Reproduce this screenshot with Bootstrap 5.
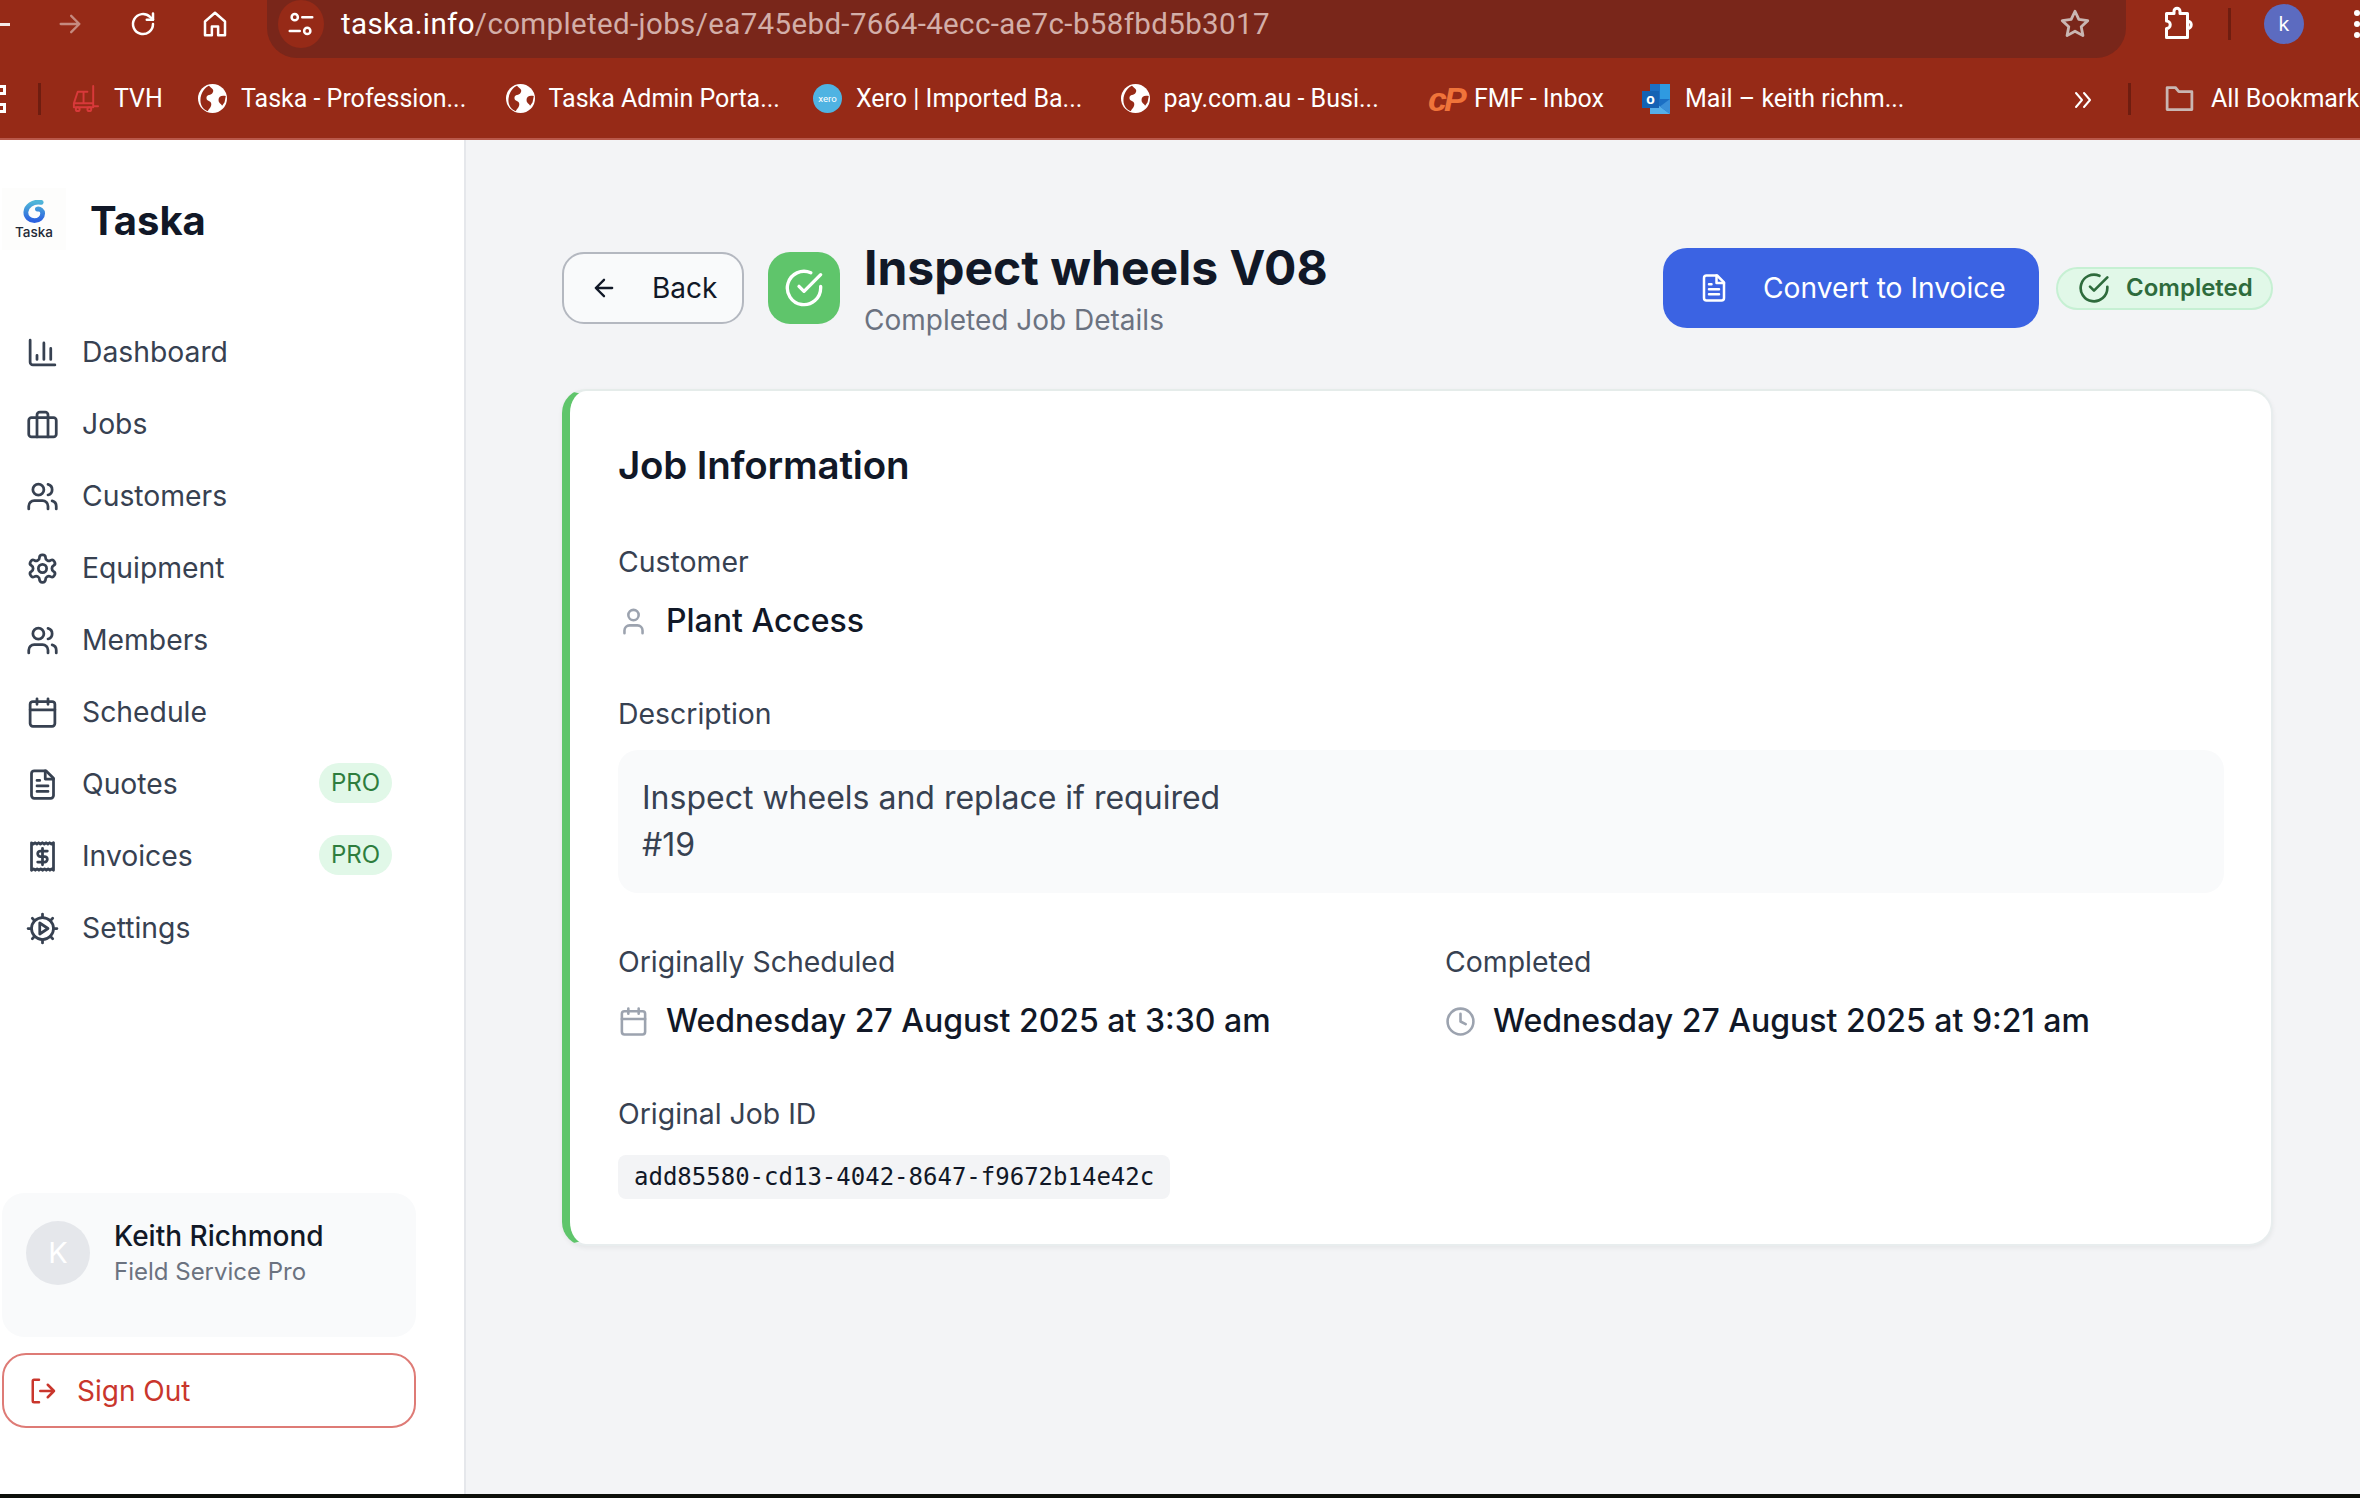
<!DOCTYPE html>
<html lang="en">
<head>
  <meta charset="UTF-8">
  <meta name="viewport" content="width=device-width,initial-scale=1">
  <title>Taska - Completed Job</title>
  <link href="https://cdn.jsdelivr.net/npm/bootstrap@5.3.3/dist/css/bootstrap.min.css" rel="stylesheet">
  <style>
    html,body{height:100%;overflow:hidden}
    body{font-family:"Inter","Liberation Sans",sans-serif;background:#f3f4f6;color:#111827}
    svg.ico{fill:none;stroke:currentColor;stroke-width:2;stroke-linecap:round;stroke-linejoin:round;flex:none}
    .shell{width:2360px;height:1498px}

    .tabs-row{height:58px;background:#962a17;color:#fff}
    .back-stub{width:10px;height:3px;background:#fff;margin-top:-10px;margin-right:46px;opacity:.9;flex:none}
    .fwd-ico{width:28px;height:28px;color:#c58a7f;margin-right:44px;margin-top:-10px}
    .rel-ico{width:30px;height:30px;margin-right:42px;margin-top:-10px}
    .home-ico{width:30px;height:30px;margin-right:37px;margin-top:-10px}
    .omni{width:1859px;height:58px;background:#79261a;border-radius:0 0 30px 30px;padding:0 34px 10px 11px;font-family:"Roboto","Liberation Sans",sans-serif;font-size:29.5px;letter-spacing:.36px;flex:none}
    .tune-wrap{width:46px;height:48px;border-radius:50%;background:#962a17;margin-right:17px;flex:none}
    .tune-wrap svg{width:30px;height:30px}
    .url-host{color:#fff}
    .url-path{color:#d3aea8}
    .star-ico{width:34px;height:34px;color:#c9b6b2}
    .ext-ico{width:36px;height:36px;margin-left:33px;margin-top:-10px}
    .vsep{width:3px;height:32px;background:#6f1d10;flex:none}
    .tabs-row .vsep{margin-left:33px;margin-top:-10px}
    .prof{width:40px;height:40px;border-radius:50%;background:#5c6bc0;color:#fff;font-size:20px;flex:none;margin-top:-10px}
    .dots{width:6px;margin-left:50px;gap:5px;margin-top:-10px}
    .dots span{width:6px;height:6px;border-radius:50%;background:#fff}

    .bm-row{height:82px;padding-top:1px;background:#962a17;color:#fff;border-bottom:2px solid #b9584a;font-family:"Roboto","Liberation Sans",sans-serif;font-size:25px;white-space:nowrap;overflow:hidden}
    .bm{gap:14px;flex:none}
    .bm svg{width:29px;height:29px;flex:none}
    .grid-stub{width:6px;height:28px;flex:none;margin-right:32px}
    .bm-row .vsep{height:32px;margin-right:29px}
    .bw-tvh{width:128px;gap:15px}
    .bw-wide{width:307.5px}
    .bw-fmf{width:213px;gap:13px}
    .bw-mail{width:432px;gap:12px}
    .bw-mail svg{width:32px;height:32px}
    .bm-cp{font-weight:900;font-style:italic;color:#f0743a;font-size:34px;letter-spacing:-3px;width:33px;line-height:30px;font-family:"Liberation Sans",sans-serif}
    .more-box{width:55px;flex:none}
    .more-box svg{width:20px;height:20px;display:block;margin-top:2px}
    .bm-row .sep2{margin-right:32px}
    .bw-all{gap:15px}
    .bw-all svg{width:33px;height:33px;color:#c9b6b2}

    .app{height:1354px}
    .side{width:466px;background:#fff;border-right:2px solid #e5e7eb;padding:0 48px 66px 2px;flex:none}
    .logo-row{margin-top:48px;margin-bottom:66px;height:62px}
    .logo-box{width:64px;height:62px;background:#fdfdfc;line-height:1}
    .logo-box svg{width:23px;height:23px;margin-top:2px}
    .logo-txt{font-size:13.5px;font-weight:500;color:#1f2937;margin-top:3px}
    .brand-name{font-size:40px;font-weight:700;color:#111827;margin-left:24px;margin-top:3px}
    .side-link{height:72px;padding:0 24px 0 23.5px;color:#374151;font-size:28.3px;gap:23.5px}
    .side-link svg{width:33px;height:33px}
    .pro-pill{width:73px;height:40px;background:#e1f8e8;color:#2e7d3e;font-size:24px;font-weight:400;border-radius:20px;margin-top:-2px}
    .user-box{height:144px;background:#f9fafb;border-radius:22px;padding:25px 24px 0;gap:24px;margin-top:auto}
    .avatar-k{width:64px;height:64px;border-radius:50%;background:#e5e7eb;color:#fff;font-size:29px;flex:none;margin-top:3px}
    .user-name{font-size:28px;font-weight:500;line-height:36px;color:#111827}
    .user-role{font-size:24px;line-height:36px;color:#6b7280}
    .out-btn{height:75px;margin-top:16px;border:2px solid #de7b76;border-radius:24px;color:#c9362c;font-size:28px;padding:0 0 0 25px;gap:18px;background:#fff;text-align:left}
    .out-btn svg{width:30px;height:30px}

    .main-pane{padding:108px 87px 0 96px;min-width:0}
    .head-row{height:80px}
    .back-btn{width:182px;height:72px;border:2px solid #b4b8c0;border-radius:22px;background:#f9fafb;color:#111827;font-size:28px;padding:0 0 0 26px;gap:34px;flex:none}
    .back-btn svg{width:28px;height:28px}
    .ok-tile{width:72px;height:72px;border-radius:22px;background:#5fc56b;color:#fff;margin-left:24px;margin-right:24px;flex:none}
    .ok-tile svg{width:40px;height:40px}
    .job-title{font-size:48px;font-weight:700;line-height:58px;margin:0 0 5px;color:#111827}
    .job-sub{font-size:28px;line-height:36px;color:#6b7280}
    .conv-btn{width:376px;height:80px;border-radius:24px;background:#3b63e3;color:#fff;border:0;font-size:28.2px;padding:0 0 0 36px;gap:34px;flex:none}
    .conv-btn svg{width:30px;height:30px}
    .done-pill{width:217px;height:43px;margin-left:17px;background:#e1f8e8;border:2px solid #c6f0d3;border-radius:22px;color:#2e6b3c;font-size:24px;font-weight:600;gap:16px;padding:0 0 0 20px;flex:none}
    .done-pill svg{width:32px;height:32px}
    .job-card{margin-top:61px;height:857px;border:0;border-top:2px solid #e5ecea;border-right:2px solid #e8edee;border-bottom:2px solid #e8edee;border-left:8px solid #5fc56b;border-radius:24px;padding:49px 47px 0 48px;box-shadow:0 2px 5px rgba(0,0,0,.06)}
    .info-head{font-size:38.5px;font-weight:600;line-height:50px;margin:0 0 52px;color:#111827;letter-spacing:-.2px}
    .fld-label{font-size:28.4px;line-height:40px;color:#374151;margin-bottom:16px}
    .fld-value{font-size:32px;font-weight:500;line-height:46px;color:#111827;gap:17px;margin-bottom:50px}
    .fld-value svg{width:31px;height:31px;color:#9ca3af}
    .desc-box{height:143px;background:#f9fafb;border-radius:20px;padding:24px;font-size:32px;line-height:47px;color:#374151;margin-bottom:49px}
    .date-grid{display:grid;grid-template-columns:1fr 1fr;column-gap:48px}
    .id-wrap{margin-top:5px}
    .id-chip{display:block;width:552px;height:44px;line-height:44px;padding:0 16px;border-radius:8px;background:#f3f4f6;color:#111827;font-family:"DejaVu Sans Mono",monospace;font-size:24px;white-space:nowrap}
    .strip{height:4px;background:#0d0f0a}
  </style>
</head>
<body>
<div class="shell d-flex flex-column">

  <div class="tabs-row d-flex align-items-center">
    <span class="back-stub"></span>
    <svg class="ico fwd-ico" viewBox="0 0 24 24"><path d="M4 12h16M13 5l7 7-7 7"/></svg>
    <svg class="ico rel-ico" viewBox="0 0 24 24"><path d="M20 12a8 8 0 1 1-2.400-5.700L20 8.500"/><path d="M20 3.500v5h-5"/></svg>
    <svg class="ico home-ico" viewBox="0 0 24 24"><path d="M4 21V10l8-7 8 7v11h-5.500v-7h-5v7z"/></svg>
    <div class="omni d-flex align-items-center">
      <span class="tune-wrap d-flex align-items-center justify-content-center">
        <svg class="ico" viewBox="0 0 24 24"><circle cx="7" cy="6.500" r="2.500"/><path d="M13 6.500h8M3 17.500h8"/><circle cx="17" cy="17.500" r="2.500"/></svg>
      </span>
      <span><span class="url-host">taska.info</span><span class="url-path">/completed-jobs/ea745ebd-7664-4ecc-ae7c-b58fbd5b3017</span></span>
      <svg class="ico star-ico ms-auto" viewBox="0 0 24 24"><path d="M12 3l2.700 5.800 6.300.8-4.600 4.300 1.200 6.300-5.600-3.100-5.600 3.100 1.200-6.300L3 9.600l6.300-.8z"/></svg>
    </div>
    <svg class="ico ext-ico" viewBox="0 0 24 24"><path d="M5 5h5V3.500a2 2 0 0 1 4 0V5h5v16H5v-6a2.500 2.500 0 0 0 0-5zM19 10a2.500 2.500 0 0 1 0 5"/></svg>
    <span class="vsep"></span>
    <span class="prof d-flex align-items-center justify-content-center ms-auto">k</span>
    <span class="dots d-flex flex-column"><span></span><span></span><span></span></span>
  </div>

  <div class="bm-row d-flex align-items-center">
    <svg class="grid-stub" viewBox="0 0 6 28"><path d="M-3 1.500h7.500v7h-7.500M-3 19.500h7.500v7h-7.500" fill="none" stroke="#fff" stroke-width="3"/></svg>
    <span class="vsep"></span>
    <span class="bm bw-tvh d-flex align-items-center">
      <svg class="ico" viewBox="0 0 30 30" color="#d8393a"><path d="M24 2v21h5M18 8H8L4 20h20M4 20v4h20M14 8v12"/><circle cx="8" cy="26" r="2"/><circle cx="20" cy="26" r="2"/></svg>
      <span>TVH</span>
    </span>
    <span class="bm bw-wide d-flex align-items-center">
      <svg viewBox="0 0 24 24"><circle cx="12" cy="12" r="12" fill="#fff"/><path d="M9 1.500c2 2 5 3 3 6-1 2-5 1-5 4s4 2 4 5-2 4-3 6c-3-1-6-4-6-9 0-6 4-11 7-12zM23 10c-3-1-6 0-6 3s2 3 3 5l2-3z" fill="#962a17"/></svg>
      <span>Taska - Profession...</span>
    </span>
    <span class="bm bw-wide d-flex align-items-center">
      <svg viewBox="0 0 24 24"><circle cx="12" cy="12" r="12" fill="#fff"/><path d="M9 1.500c2 2 5 3 3 6-1 2-5 1-5 4s4 2 4 5-2 4-3 6c-3-1-6-4-6-9 0-6 4-11 7-12zM23 10c-3-1-6 0-6 3s2 3 3 5l2-3z" fill="#962a17"/></svg>
      <span>Taska Admin Porta...</span>
    </span>
    <span class="bm bw-wide d-flex align-items-center">
      <svg viewBox="0 0 30 30"><circle cx="15" cy="15" r="15" fill="#4fb3e2"/><text x="15" y="18.500" text-anchor="middle" font-size="10" font-family="Roboto,sans-serif" fill="#fff">xero</text></svg>
      <span>Xero | Imported Ba...</span>
    </span>
    <span class="bm bw-wide d-flex align-items-center">
      <svg viewBox="0 0 24 24"><circle cx="12" cy="12" r="12" fill="#fff"/><path d="M9 1.500c2 2 5 3 3 6-1 2-5 1-5 4s4 2 4 5-2 4-3 6c-3-1-6-4-6-9 0-6 4-11 7-12zM23 10c-3-1-6 0-6 3s2 3 3 5l2-3z" fill="#962a17"/></svg>
      <span>pay.com.au - Busi...</span>
    </span>
    <span class="bm bw-fmf d-flex align-items-center">
      <span class="bm-cp">cP</span>
      <span>FMF - Inbox</span>
    </span>
    <span class="bm bw-mail d-flex align-items-center">
      <svg viewBox="0 0 32 32"><rect x="9" y="1" width="20" height="30" fill="#1b6fc4"/><rect x="19" y="1" width="10" height="15" fill="#2f9ae0"/><path d="M9 16l20 15H9z" fill="#56aee8"/><path d="M29 16v15l-10-7.500z" fill="#3a8fd8"/><rect x="1" y="8" width="17" height="17" fill="#1462b4"/><text x="9.500" y="21" text-anchor="middle" font-size="15" font-weight="700" font-family="Roboto,sans-serif" fill="#fff">o</text></svg>
      <span>Mail – keith richm...</span>
    </span>
    <span class="more-box">
      <svg class="ico" viewBox="0 0 20 20"><path d="M3 3l6 7-6 7M11 3l6 7-6 7"/></svg>
    </span>
    <span class="vsep sep2"></span>
    <span class="bm bw-all d-flex align-items-center">
      <svg class="ico" viewBox="0 0 24 24"><path d="M3 4h6l2.500 3H21v13H3z"/></svg>
      <span>All Bookmarks</span>
    </span>
  </div>

  <div class="app d-flex">
    <aside class="side d-flex flex-column">
      <div class="logo-row d-flex align-items-center">
        <div class="logo-box d-flex flex-column align-items-center justify-content-center">
          <svg viewBox="0 0 24 24">
            <defs><linearGradient id="swirl" x1="0" y1="0" x2="0" y2="1"><stop offset="0" stop-color="#4fb6d8"/><stop offset="1" stop-color="#2d62e0"/></linearGradient></defs>
            <path d="M19 2.500C10 1 3.500 6.500 3 12.500 2.700 18 7 21.500 12 21.500c5 0 8.500-3.500 8.500-7.500 0-3-2.500-5-5.500-4.500" fill="none" stroke="url(#swirl)" stroke-width="5" stroke-linecap="round"/>
          </svg>
          <span class="logo-txt">Taska</span>
        </div>
        <span class="brand-name">Taska</span>
      </div>

      <nav class="d-flex flex-column">
        <a class="side-link d-flex align-items-center text-decoration-none" href="#"><svg class="ico" viewBox="0 0 24 24"><path d="M3 3v16a2 2 0 0 0 2 2h16"/><path d="M8 17v-3M13 17V5M18 17V9"/></svg><span>Dashboard</span></a>
        <a class="side-link d-flex align-items-center text-decoration-none" href="#"><svg class="ico" viewBox="0 0 24 24"><rect x="2" y="7" width="20" height="14" rx="2"/><path d="M16 21V5a2 2 0 0 0-2-2h-4a2 2 0 0 0-2 2v16"/></svg><span>Jobs</span></a>
        <a class="side-link d-flex align-items-center text-decoration-none" href="#"><svg class="ico" viewBox="0 0 24 24"><path d="M16 21v-2a4 4 0 0 0-4-4H6a4 4 0 0 0-4 4v2"/><circle cx="9" cy="7" r="4"/><path d="M22 21v-2a4 4 0 0 0-3-3.870"/><path d="M16 3.130a4 4 0 0 1 0 7.750"/></svg><span>Customers</span></a>
        <a class="side-link d-flex align-items-center text-decoration-none" href="#"><svg class="ico" viewBox="0 0 24 24"><path d="M12.220 2h-.44a2 2 0 0 0-2 2v.18a2 2 0 0 1-1 1.730l-.43.25a2 2 0 0 1-2 0l-.15-.08a2 2 0 0 0-2.730.73l-.22.38a2 2 0 0 0 .73 2.730l.15.1a2 2 0 0 1 1 1.720v.51a2 2 0 0 1-1 1.740l-.15.09a2 2 0 0 0-.73 2.730l.22.38a2 2 0 0 0 2.730.73l.15-.08a2 2 0 0 1 2 0l.43.25a2 2 0 0 1 1 1.730V20a2 2 0 0 0 2 2h.44a2 2 0 0 0 2-2v-.18a2 2 0 0 1 1-1.730l.43-.25a2 2 0 0 1 2 0l.15.08a2 2 0 0 0 2.730-.73l.22-.39a2 2 0 0 0-.73-2.730l-.15-.08a2 2 0 0 1-1-1.740v-.5a2 2 0 0 1 1-1.740l.15-.09a2 2 0 0 0 .73-2.730l-.22-.38a2 2 0 0 0-2.730-.73l-.15.08a2 2 0 0 1-2 0l-.43-.25a2 2 0 0 1-1-1.730V4a2 2 0 0 0-2-2z"/><circle cx="12" cy="12" r="3"/></svg><span>Equipment</span></a>
        <a class="side-link d-flex align-items-center text-decoration-none" href="#"><svg class="ico" viewBox="0 0 24 24"><path d="M16 21v-2a4 4 0 0 0-4-4H6a4 4 0 0 0-4 4v2"/><circle cx="9" cy="7" r="4"/><path d="M22 21v-2a4 4 0 0 0-3-3.870"/><path d="M16 3.130a4 4 0 0 1 0 7.750"/></svg><span>Members</span></a>
        <a class="side-link d-flex align-items-center text-decoration-none" href="#"><svg class="ico" viewBox="0 0 24 24"><rect x="3" y="4" width="18" height="18" rx="2"/><path d="M16 2v4M8 2v4M3 10h18"/></svg><span>Schedule</span></a>
        <a class="side-link d-flex align-items-center text-decoration-none" href="#"><svg class="ico" viewBox="0 0 24 24"><path d="M14.500 2H6a2 2 0 0 0-2 2v16a2 2 0 0 0 2 2h12a2 2 0 0 0 2-2V7.500z"/><path d="M14 2v6h6M16 13H8M16 17H8M10 9H8"/></svg><span>Quotes</span><span class="pro-pill d-flex align-items-center justify-content-center ms-auto">PRO</span></a>
        <a class="side-link d-flex align-items-center text-decoration-none" href="#"><svg class="ico" viewBox="0 0 24 24"><path d="M4 2l1.300 1 1.300-1 1.300 1 1.300-1 1.300 1L12 2l1.300 1 1.300-1 1.300 1 1.300-1 1.300 1L20 2v20l-1.300-1-1.300 1-1.300-1-1.300 1-1.300-1L12 22l-1.300-1-1.300 1-1.300-1-1.300 1-1.300-1L4 22z"/><path d="M15.500 8h-5a2 2 0 1 0 0 4h3a2 2 0 1 1 0 4h-5M12 6v12"/></svg><span>Invoices</span><span class="pro-pill d-flex align-items-center justify-content-center ms-auto">PRO</span></a>
        <a class="side-link d-flex align-items-center text-decoration-none" href="#"><svg class="ico" viewBox="0 0 24 24"><circle cx="12" cy="12" r="8"/><path d="M12 1.500V4M12 20v2.500M1.500 12H4M20 12h2.500M4.600 4.600l1.700 1.700M17.700 17.700l1.700 1.700M4.600 19.400l1.700-1.700M17.700 6.300l1.700-1.700"/><path d="M10 8v8l6-4z"/></svg><span>Settings</span></a>
      </nav>

      <div class="user-box d-flex">
        <span class="avatar-k d-flex align-items-center justify-content-center">K</span>
        <div>
          <div class="user-name">Keith Richmond</div>
          <div class="user-role">Field Service Pro</div>
        </div>
      </div>
      <button class="btn out-btn d-flex align-items-center w-100" type="button">
        <svg class="ico" viewBox="0 0 24 24"><path d="M8 21H4a1 1 0 0 1-1-1V4a1 1 0 0 1 1-1h4"/><path d="M15 17l5-5-5-5M20 12H9"/></svg>
        <span>Sign Out</span>
      </button>
    </aside>

    <main class="main-pane flex-grow-1">
      <div class="head-row d-flex align-items-center">
        <button class="btn back-btn d-flex align-items-center" type="button">
          <svg class="ico" viewBox="0 0 24 24"><path d="M19 12H5M12 19l-7-7 7-7"/></svg>
          <span>Back</span>
        </button>
        <span class="ok-tile d-flex align-items-center justify-content-center">
          <svg class="ico" viewBox="0 0 24 24"><path d="M22 11.080V12a10 10 0 1 1-5.930-9.140"/><path d="M22 4 12 14.010l-3-3"/></svg>
        </span>
        <div>
          <h1 class="job-title">Inspect wheels V08</h1>
          <div class="job-sub">Completed Job Details</div>
        </div>
        <button class="btn conv-btn d-flex align-items-center ms-auto" type="button">
          <svg class="ico" viewBox="0 0 24 24"><path d="M14.500 2H6a2 2 0 0 0-2 2v16a2 2 0 0 0 2 2h12a2 2 0 0 0 2-2V7.500z"/><path d="M14 2v6h6M16 13H8M16 17H8M10 9H8"/></svg>
          <span>Convert to Invoice</span>
        </button>
        <span class="done-pill d-flex align-items-center">
          <svg class="ico" viewBox="0 0 24 24"><path d="M22 11.080V12a10 10 0 1 1-5.930-9.140"/><path d="M22 4 12 14.010l-3-3"/></svg>
          <span>Completed</span>
        </span>
      </div>

      <section class="card job-card">
        <h2 class="info-head">Job Information</h2>

        <div class="fld-label">Customer</div>
        <div class="fld-value d-flex align-items-center">
          <svg class="ico" viewBox="0 0 24 24"><path d="M19 21v-2a4 4 0 0 0-4-4H9a4 4 0 0 0-4 4v2"/><circle cx="12" cy="7" r="4"/></svg>
          <span>Plant Access</span>
        </div>

        <div class="fld-label">Description</div>
        <div class="desc-box">Inspect wheels and replace if required<br>#19</div>

        <div class="date-grid">
          <div>
            <div class="fld-label">Originally Scheduled</div>
            <div class="fld-value d-flex align-items-center">
              <svg class="ico" viewBox="0 0 24 24"><rect x="3" y="4" width="18" height="18" rx="2"/><path d="M16 2v4M8 2v4M3 10h18"/></svg>
              <span>Wednesday 27 August 2025 at 3:30 am</span>
            </div>
          </div>
          <div>
            <div class="fld-label">Completed</div>
            <div class="fld-value d-flex align-items-center">
              <svg class="ico" viewBox="0 0 24 24"><circle cx="12" cy="12" r="10"/><path d="M12 6v6l4 2"/></svg>
              <span>Wednesday 27 August 2025 at 9:21 am</span>
            </div>
          </div>
        </div>

        <div class="fld-label">Original Job ID</div>
        <div class="id-wrap"><code class="id-chip">add85580-cd13-4042-8647-f9672b14e42c</code></div>
      </section>
    </main>
  </div>

  <div class="strip"></div>
</div>
<script src="https://cdn.jsdelivr.net/npm/bootstrap@5.3.3/dist/js/bootstrap.bundle.min.js"></script>
</body>
</html>
